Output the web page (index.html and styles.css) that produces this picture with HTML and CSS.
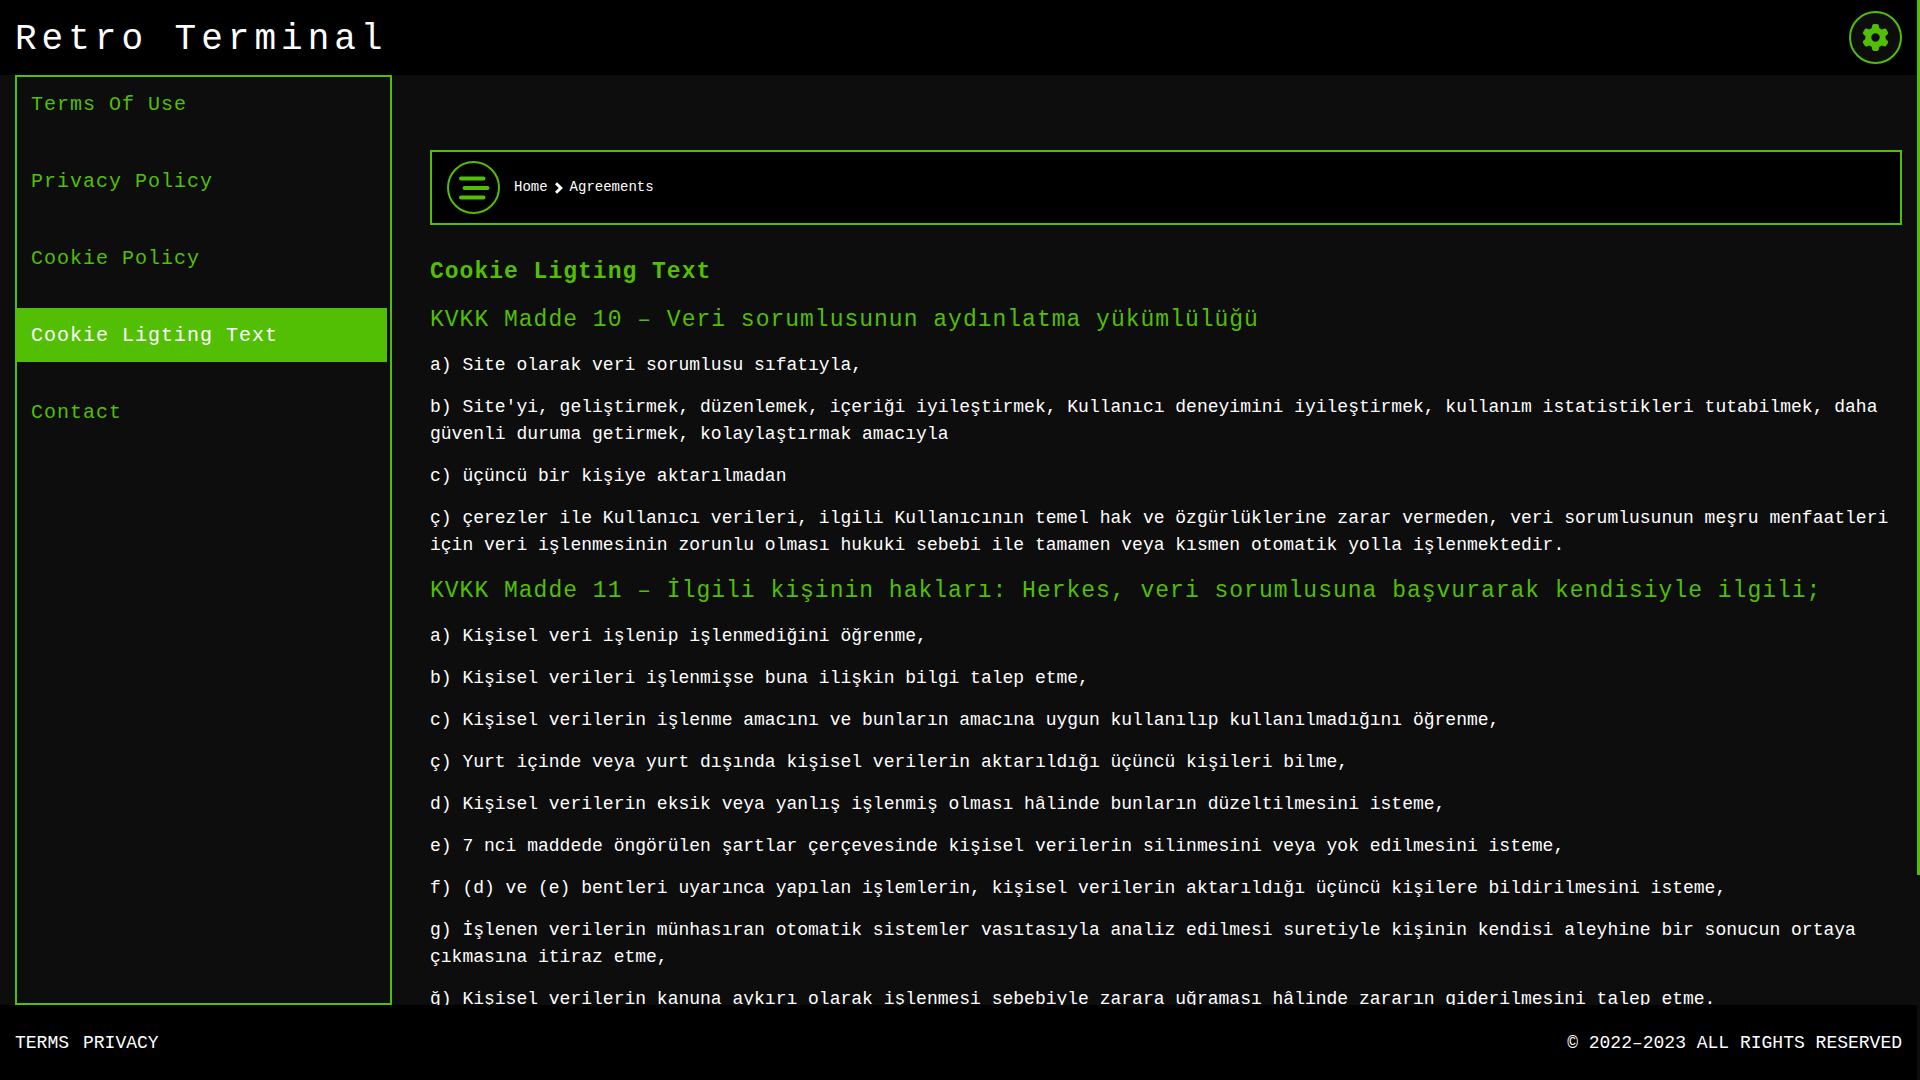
FILE: index.html
```html
<!DOCTYPE html>
<html lang="tr">
<head>
<meta charset="utf-8">
<title>Retro Terminal</title>
<link rel="stylesheet" href="styles.css">
</head>
<body>
<header class="topbar">
  <a class="brand" href="#">Retro Terminal</a>
  <button class="round-button settings" type="button" aria-label="Settings">
    <svg viewBox="0 0 512 512" width="27" height="27" fill="currentColor" aria-hidden="true"><path d="M495.900 166.600c3.200 8.700.5 18.400-6.400 24.600l-43.300 39.400c1.100 8.300 1.700 16.800 1.700 25.400s-.6 17.100-1.700 25.400l43.300 39.400c6.900 6.200 9.600 15.900 6.400 24.600-4.400 11.900-9.700 23.300-15.800 34.300l-4.700 8.100c-6.600 11-14 21.400-22.100 31.200-5.900 7.200-15.700 9.600-24.500 6.800l-55.700-17.700c-13.400 10.300-28.200 18.900-44 25.400l-12.500 57.100c-2 9.100-9 16.300-18.200 17.800-13.800 2.300-28 3.500-42.500 3.500s-28.700-1.200-42.500-3.500c-9.200-1.500-16.200-8.700-18.200-17.800l-12.500-57.100c-15.800-6.500-30.600-15.100-44-25.400l-55.600 17.800c-8.800 2.800-18.600.3-24.500-6.800-8.100-9.800-15.500-20.200-22.100-31.200l-4.700-8.100c-6.100-11-11.400-22.400-15.800-34.300-3.200-8.700-.5-18.400 6.400-24.600l43.300-39.400c-1.100-8.400-1.700-16.900-1.700-25.500s.6-17.100 1.700-25.400l-43.300-39.400c-6.900-6.200-9.600-15.900-6.400-24.600 4.400-11.900 9.700-23.300 15.800-34.300l4.700-8.100c6.600-11 14-21.400 22.100-31.200 5.900-7.200 15.700-9.600 24.500-6.800l55.700 17.700c13.400-10.300 28.200-18.900 44-25.400l12.500-57.100c2-9.100 9-16.300 18.200-17.800C227.300 1.200 241.500 0 256 0s28.700 1.200 42.500 3.500c9.200 1.500 16.200 8.700 18.200 17.800l12.500 57.100c15.800 6.500 30.600 15.100 44 25.400l55.700-17.700c8.800-2.800 18.600-.3 24.500 6.800 8.100 9.800 15.500 20.200 22.100 31.200l4.700 8.100c6.100 11 11.400 22.400 15.800 34.300zM256 336a80 80 0 1 0 0-160 80 80 0 1 0 0 160z"/></svg>
  </button>
</header>

<div class="layout">
  <nav class="sidebar" aria-label="Agreements">
    <a class="sidebar-link" href="#">Terms Of Use</a>
    <a class="sidebar-link" href="#">Privacy Policy</a>
    <a class="sidebar-link" href="#">Cookie Policy</a>
    <a class="sidebar-link active" href="#" aria-current="page">Cookie Ligting Text</a>
    <a class="sidebar-link" href="#">Contact</a>
  </nav>

  <main class="content">
    <div class="breadcrumb">
      <button class="round-button" type="button" aria-label="Toggle menu">
        <svg viewBox="0 0 32 24" width="32" height="24" fill="none" stroke="currentColor" stroke-width="4" stroke-linecap="round" aria-hidden="true"><path d="M3 2.500H25.500M6.500 12H29.500M3 21.500H25.500"/></svg>
      </button>
      <nav class="crumbs" aria-label="Breadcrumb">
        <a href="#">Home</a>
        <svg viewBox="0 0 8 12" width="8" height="12" fill="none" stroke="currentColor" stroke-width="3" aria-hidden="true"><path d="M1 1.200L5.800 6L1 10.800"/></svg>
        <a href="#">Agreements</a>
      </nav>
    </div>

    <article class="article">
      <h1>Cookie Ligting Text</h1>
      <h2>KVKK Madde 10 – Veri sorumlusunun aydınlatma yükümlülüğü</h2>
      <p>a) Site olarak veri sorumlusu sıfatıyla,</p>
      <p>b) Site'yi, geliştirmek, düzenlemek, içeriği iyileştirmek, Kullanıcı deneyimini iyileştirmek, kullanım istatistikleri tutabilmek, daha güvenli duruma getirmek, kolaylaştırmak amacıyla</p>
      <p>c) üçüncü bir kişiye aktarılmadan</p>
      <p>ç) çerezler ile Kullanıcı verileri, ilgili Kullanıcının temel hak ve özgürlüklerine zarar vermeden, veri sorumlusunun meşru menfaatleri için veri işlenmesinin zorunlu olması hukuki sebebi ile tamamen veya kısmen otomatik yolla işlenmektedir.</p>
      <h2>KVKK Madde 11 – İlgili kişinin hakları: Herkes, veri sorumlusuna başvurarak kendisiyle ilgili;</h2>
      <p>a) Kişisel veri işlenip işlenmediğini öğrenme,</p>
      <p>b) Kişisel verileri işlenmişse buna ilişkin bilgi talep etme,</p>
      <p>c) Kişisel verilerin işlenme amacını ve bunların amacına uygun kullanılıp kullanılmadığını öğrenme,</p>
      <p>ç) Yurt içinde veya yurt dışında kişisel verilerin aktarıldığı üçüncü kişileri bilme,</p>
      <p>d) Kişisel verilerin eksik veya yanlış işlenmiş olması hâlinde bunların düzeltilmesini isteme,</p>
      <p>e) 7 nci maddede öngörülen şartlar çerçevesinde kişisel verilerin silinmesini veya yok edilmesini isteme,</p>
      <p>f) (d) ve (e) bentleri uyarınca yapılan işlemlerin, kişisel verilerin aktarıldığı üçüncü kişilere bildirilmesini isteme,</p>
      <p>g) İşlenen verilerin münhasıran otomatik sistemler vasıtasıyla analiz edilmesi suretiyle kişinin kendisi aleyhine bir sonucun ortaya çıkmasına itiraz etme,</p>
      <p>ğ) Kişisel verilerin kanuna aykırı olarak işlenmesi sebebiyle zarara uğraması hâlinde zararın giderilmesini talep etme.</p>
    </article>
  </main>
</div>

<footer class="footer">
  <nav class="footer-links" aria-label="Legal">
    <a href="#">TERMS</a>
    <a href="#">PRIVACY</a>
  </nav>
  <span>© 2022–2023 ALL RIGHTS RESERVED</span>
</footer>

<div class="scroll-thumb"></div>
</body>
</html>
```
FILE: styles.css
```css
:root {
  --green: #52bf04;
  --ground: #0d0d0d;
  --edge: 15px;
}

* {
  box-sizing: border-box;
}

body {
  display: flex;
  flex-direction: column;
  height: 100vh;
  margin: 0;
  padding-right: 3px;
  overflow: hidden;
  background: var(--ground);
  color: #fff;
  font: 18px/27px "Liberation Mono", monospace;
}

a {
  color: inherit;
  text-decoration: none;
}

.topbar,
.footer {
  display: flex;
  flex: none;
  align-items: center;
  justify-content: space-between;
  height: 75px;
  padding: 0 var(--edge);
  background: #000;
}

.footer {
  padding-top: 2px;
}

.brand {
  padding-top: 5px;
  font-size: 36px;
  line-height: 48px;
  letter-spacing: 5px;
}

.round-button {
  display: flex;
  flex: none;
  align-items: center;
  justify-content: center;
  width: 53px;
  height: 53px;
  padding: 0;
  border: 2px solid var(--green);
  border-radius: 50%;
  background: #000;
  color: var(--green);
}

.settings {
  background: var(--ground);
}

.layout {
  display: grid;
  flex: 1;
  grid-template-columns: 377px 1fr;
  gap: 38px;
  min-height: 0;
  padding: 0 var(--edge);
}

.sidebar {
  display: flex;
  flex-direction: column;
  gap: 23px;
  padding-right: 3px;
  border: 2px solid var(--green);
  color: var(--green);
  font-size: 20px;
  letter-spacing: 1px;
}

.sidebar-link {
  padding: 14px 14px 12px;
  line-height: 28px;
}

.sidebar-link.active {
  background: var(--green);
  color: #fff;
}

.content {
  display: flex;
  flex-direction: column;
  gap: 31px;
  min-height: 0;
  padding-top: 75px;
  overflow: hidden;
}

.breadcrumb {
  display: flex;
  flex: none;
  align-items: center;
  gap: 14px;
  height: 75px;
  padding: 0 15px;
  border: 2px solid var(--green);
  background: #000;
}

.crumbs {
  display: flex;
  align-items: center;
  gap: 7px;
  font-size: 14px;
}

.article {
  display: flex;
  flex-direction: column;
  gap: 15px;
}

.article h1,
.article h2,
.article p {
  margin: 0;
}

.article h1,
.article h2 {
  color: var(--green);
  font-size: 23px;
  letter-spacing: 1px;
}

.article h1 {
  line-height: 32px;
}

.article h2 {
  font-weight: normal;
  line-height: 34px;
}

.footer-links {
  display: flex;
  gap: 14px;
}

.scroll-thumb {
  position: fixed;
  top: 0;
  right: 0;
  width: 3px;
  height: 81%;
  background: var(--green);
}
```
